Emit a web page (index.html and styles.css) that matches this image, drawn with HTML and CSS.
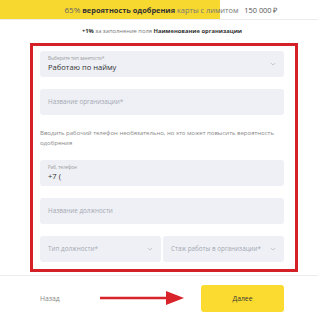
FILE: index.html
```html
<!DOCTYPE html>
<html lang="ru">
<head>
<meta charset="utf-8">
<link rel="stylesheet" href="styles.css">
</head>
<body>
<div class="topbar">
  <div class="fill" style="width:220px"></div>
  <div class="topbar-text"><span class="pct">65%</span> <b>вероятность одобрения</b> карты с лимитом <span class="sum">150 000 ₽</span></div>
</div>
<div class="bonus"><b>+1%</b> за заполнение поля <b>Наименование организации</b></div>
<div class="form">
  <div class="field select">
    <div class="label">Выберите тип занятости*</div>
    <div class="value">Работаю по найму</div>
    <svg class="chev" viewBox="0 0 8 5" width="6" height="4"><path d="M1 1l3 3 3-3" fill="none" stroke="#b4b8c4" stroke-width="1"/></svg>
  </div>
  <div class="field"><div class="ph">Название организации*</div></div>
  <p class="note">Вводить рабочий телефон необязательно, но это может повысить вероятность одобрения</p>
  <div class="field">
    <div class="label">Раб. телефон</div>
    <div class="value">+7 (</div>
  </div>
  <div class="field"><div class="ph">Название должности</div></div>
  <div class="row">
    <div class="field select"><div class="ph">Тип должности*</div>
      <svg class="chev" viewBox="0 0 8 5" width="6" height="4"><path d="M1 1l3 3 3-3" fill="none" stroke="#b4b8c4" stroke-width="1"/></svg></div>
    <div class="field select"><div class="ph">Стаж работы в организации*</div>
      <svg class="chev" viewBox="0 0 8 5" width="6" height="4"><path d="M1 1l3 3 3-3" fill="none" stroke="#b4b8c4" stroke-width="1"/></svg></div>
  </div>
</div>
<div class="footer">
  <span class="back">Назад</span>
  <svg class="arrow" viewBox="0 0 84 14" width="84" height="14"><path d="M0 7H68" stroke="#d8232a" stroke-width="2.5"/><path d="M66 0L84 7L66 14Z" fill="#d8232a"/></svg>
  <button class="next">Далее</button>
</div>
</body>
</html>
```
FILE: styles.css
```css
* { box-sizing: border-box; }
body {
  margin: 0;
  width: 318px;
  font-family: "Open Sans", "Liberation Sans", sans-serif;
  color: #333;
  background: #fff;
}
.topbar {
  position: relative;
  height: 20px;
  border-bottom: 1px solid #ececec;
}
.topbar .fill {
  position: absolute;
  left: 0; top: 0; bottom: 0;
  background: #f7d82f;
}
.topbar-text {
  position: relative;
  text-align: center;
  font-size: 7.4px;
  line-height: 19px;
  color: #777;
  padding-left: 24px;
  white-space: nowrap;
}
.topbar-text .pct { font-size: 8px; color: #666; }
.topbar-text b { color: #333; font-weight: 700; }
.topbar-text .sum { margin-left: 4px; color: #555; font-size: 7.4px; }
.bonus {
  text-align: center;
  font-size: 5.8px;
  color: #777;
  margin-top: 7px;
  line-height: 9px;
  padding-left: 6px;
}
.bonus b { color: #333; }
.form {
  margin: 7px 20px 0 30px;
  border: 3px solid #d42128;
  padding: 5px 11px 7px 7px;
  display: flex;
  flex-direction: column;
  gap: 12px;
}
.field {
  position: relative;
  height: 26px;
  background: #eef0f5;
  border-radius: 3px;
  padding: 4px 8px 0;
}
.field .label { font-size: 4.5px; color: #999; line-height: 6px; }
.field .value { font-size: 7.6px; color: #333; line-height: 12px; }
.field .ph { font-size: 6.3px; color: #a4a8b3; line-height: 18px; white-space: nowrap; }
.chev { position: absolute; right: 8px; top: 11px; }
.note {
  margin: 0;
  font-size: 6px;
  line-height: 10px;
  padding-top: 1px;
  color: #888;
}
.row { display: flex; gap: 2px; }
.row .field { flex: 1; }
.footer {
  margin-top: 3px;
  border-top: 1px solid #ececec;
  display: flex;
  align-items: center;
  height: 46px;
  padding: 0 34px 0 40px;
}
.back { font-size: 6.8px; color: #888; width: 60px; }
.arrow { margin-top: -2px; }
.next {
  margin-left: auto;
  width: 83px;
  height: 27px;
  border: 0;
  border-radius: 3px;
  background: #fcdb30;
  font-family: inherit;
  font-size: 6.8px;
  color: #333;
}
```
